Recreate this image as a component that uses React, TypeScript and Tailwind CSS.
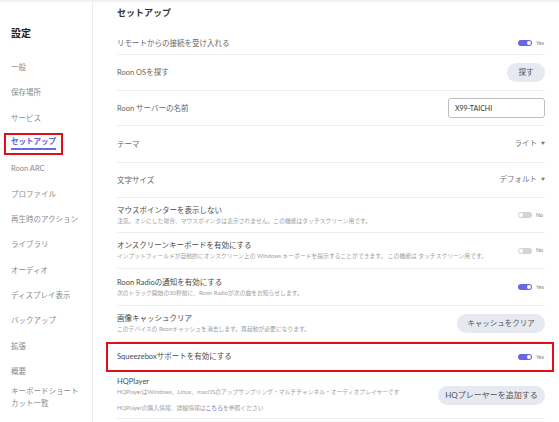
import React from "react";

const font = { fontFamily: '"Lato", "Noto Sans CJK JP", sans-serif' };

const menu = [
  "一般",
  "保存場所",
  "サービス",
  "セットアップ",
  "Roon ARC",
  "プロファイル",
  "再生時のアクション",
  "ライブラリ",
  "オーディオ",
  "ディスプレイ表示",
  "バックアップ",
  "拡張",
  "概要",
];

const Toggle: React.FC<{ on: boolean }> = ({ on }) => (
  <div className="flex items-center gap-[4px]">
    <div
      className={
        on
          ? "w-[14px] h-[6px] rounded-full bg-[#6767e6] flex items-center justify-end pr-[1px]"
          : "w-[14px] h-[6px] rounded-full bg-[#d4d4d4] flex items-center justify-start pl-[1px]"
      }
    >
      <div className="w-[4px] h-[4px] rounded-full bg-white" />
    </div>
    <span className="text-[5.5px] text-[#888] w-[9px]">{on ? "Yes" : "No"}</span>
  </div>
);

const Pill: React.FC<{ label: string; w: string; size?: string }> = ({ label, w, size }) => (
  <div
    className={`${w} h-[19px] rounded-full bg-[#e6e9f2] flex items-center justify-center text-[#555] ${size ?? "text-[7.5px]"}`}
  >
    {label}
  </div>
);

const Dropdown: React.FC<{ label: string }> = ({ label }) => (
  <div className="flex items-center gap-[4px] text-[7.5px] text-[#777]">
    <span>{label}</span>
    <span className="text-[4px]">▼</span>
  </div>
);

const Row: React.FC<{
  h: string;
  title: string;
  desc?: string;
  right?: React.ReactNode;
  extra?: string;
}> = ({ h, title, desc, right, extra }) => (
  <div className={`${h} ${extra ?? ""} flex items-center justify-between border-b border-[#eeeeee]`}>
    <div className="flex flex-col">
      <span className={desc ? "text-[7.5px] leading-[11px] text-[#4a4a4a]" : "text-[7.5px] leading-[11px] text-[#666]"}>
        {title}
      </span>
      {desc && <span className="text-[5.8px] leading-[10px] text-[#a0a0a0] whitespace-nowrap">{desc}</span>}
    </div>
    {right}
  </div>
);

export default function App() {
  return (
    <div style={font} className="w-[559px] h-[422px] overflow-hidden bg-white flex border-t-2 border-[#f2f2f2]">
      {/* sidebar */}
      <div className="w-[93px] shrink-0 border-r border-[#ececec] flex flex-col pl-[11px]">
        <div className="h-[53px] flex items-center pt-[10px] text-[10px] font-bold text-[#222]">設定</div>
        {menu.map((m) =>
          m === "セットアップ" ? (
            <div key={m} className="h-[25.33px] flex items-center">
              <div className="-ml-[7px] px-[5px] h-[22px] border-2 border-[#e0101a] flex flex-col justify-center">
                <span className="text-[7.5px] leading-[10px] font-bold text-[#5c5cdc]">{m}</span>
                <div className="h-[2px] bg-[#6a6ae6] mt-[1px]" />
              </div>
            </div>
          ) : (
            <div key={m} className="h-[25.33px] flex items-center text-[7.5px] text-[#8a8a8a]">
              {m}
            </div>
          )
        )}
        <div className="pt-[2px] text-[7.5px] leading-[12px] text-[#8a8a8a]">
          キーボードショート
          <br />
          カット一覧
        </div>
      </div>

      {/* main */}
      <div className="flex-1 pl-[24px] pr-[14px] flex flex-col">
        <div className="h-[20px] flex items-center pt-[2px] text-[9px] font-bold text-[#333]">セットアップ</div>
        <Row h="h-[33px]" extra="pt-[10px]" title="リモートからの接続を受け入れる" right={<Toggle on />} />
        <Row h="h-[36px]" title="Roon OSを探す" right={<Pill label="探す" w="w-[38px]" />} />
        <Row
          h="h-[35px]"
          title="Roon サーバーの名前"
          right={
            <div className="w-[97px] h-[20px] border border-[#bdbdbd] rounded-[3px] flex items-center px-[6px] text-[7px] text-[#333]">
              X99-TAICHI
            </div>
          }
        />
        <Row h="h-[37px]" title="テーマ" right={<Dropdown label="ライト" />} />
        <Row h="h-[35px]" title="文字サイズ" right={<Dropdown label="デフォルト" />} />
        <Row
          h="h-[35px]"
          title="マウスポインターを表示しない"
          desc="注意。オンにした場合、マウスポインタは表示されません。この機能はタッチスクリーン用です。"
          right={<Toggle on={false} />}
        />
        <Row
          h="h-[36px]"
          title="オンスクリーンキーボードを有効にする"
          desc="インプットフィールドが自動的にオンスクリーン上の Windows キーボードを提示することができます。 この機能は タッチスクリーン用です。"
          right={<Toggle on={false} />}
        />
        <Row
          h="h-[37px]"
          title="Roon Radioの通知を有効にする"
          desc="次のトラック開始の30秒前に、Roon Radioが次の曲をお知らせします。"
          right={<Toggle on />}
        />
        <Row
          h="h-[36px]"
          title="画像キャッシュクリア"
          desc="このデバイスの Roonキャッシュを消去します。再起動が必要になります。"
          right={<Pill label="キャッシュをクリア" w="w-[88px]" />}
        />
        <div className="h-[30px] -ml-[11px] -mr-[9px] pl-[9px] pr-[7px] border-2 border-[#e0101a] flex items-center justify-between">
          <span className="text-[7.5px] text-[#4a4a4a]">Squeezeboxサポートを有効にする</span>
          <Toggle on />
        </div>
        <div className="h-[47px] flex items-center justify-between border-b border-[#eeeeee]">
          <div className="flex flex-col">
            <span className="text-[7.5px] leading-[10px] text-[#4a4a4a]">HQPlayer</span>
            <span className="text-[5.8px] leading-[10px] text-[#a0a0a0] whitespace-nowrap">
              HQPlayerはWindows、Linux、macOSのアップサンプリング・マルチチャンネル・オーディオプレイヤーです
            </span>
            <span className="mt-[6px] text-[5.8px] leading-[10px] text-[#a0a0a0] whitespace-nowrap">
              HQPlayerの購入情報、詳細情報は<span className="text-[#5c5cdc]">こちら</span>を参照ください
            </span>
          </div>
          <Pill label="HQプレーヤーを追加する" w="w-[107px]" size="text-[8px]" />
        </div>
      </div>
    </div>
  );
}
